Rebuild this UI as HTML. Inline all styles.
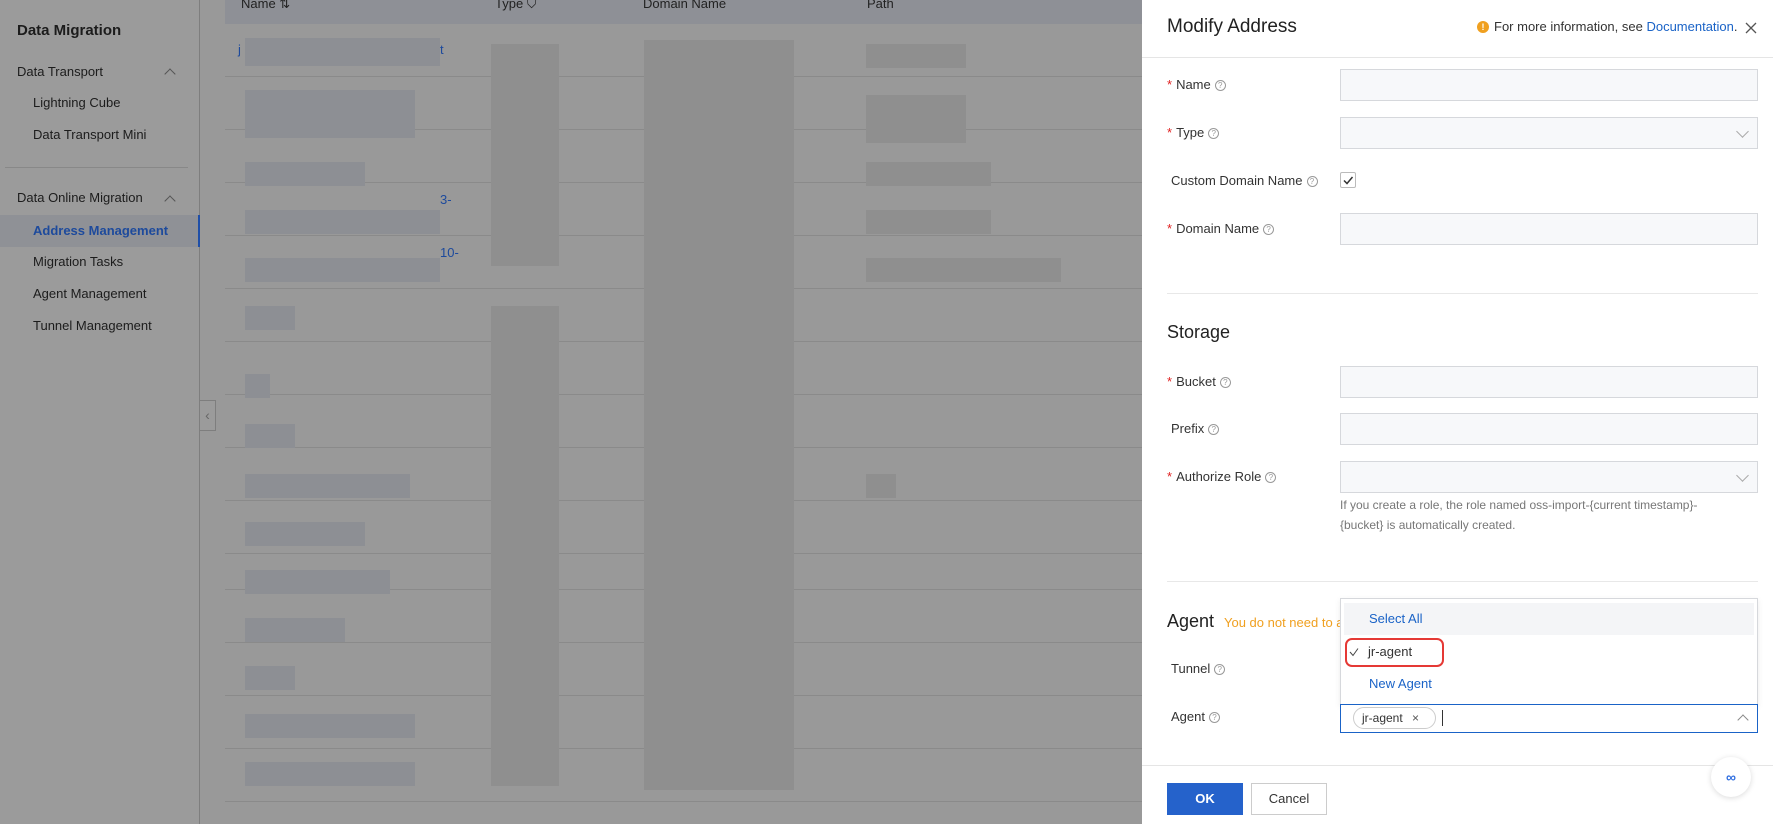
<!DOCTYPE html>
<html><head><meta charset="utf-8"><style>
*{box-sizing:border-box;margin:0;padding:0}
body{width:1773px;height:824px;overflow:hidden;position:relative;background:#999;font-family:"Liberation Sans",sans-serif;font-size:13px;color:#333}
.a{position:absolute}
.sb{left:0;top:0;width:200px;height:824px;background:#9b9b9b;border-right:1px solid #7e7e7e}
.sbt{position:absolute;white-space:nowrap;color:#1c1c1c}
.line{position:absolute;height:1px;background:#8a8a8a}
.blk{position:absolute;background:#8d8f94}
.blk2{position:absolute;background:#8f8f8f}
.dr{left:1142px;top:0;width:631px;height:824px;background:#fff}
.lbl{position:absolute;white-space:nowrap;color:#333;font-size:13px}
.req{color:#e02020;margin-right:4px}
.q{display:inline-block;width:11px;height:11px;border:1px solid #999;border-radius:50%;font-size:8px;line-height:9px;text-align:center;color:#999;margin-left:4px;vertical-align:1px}
.inp{position:absolute;left:1340px;width:418px;height:32px;background:#f7f8fa;border:1px solid #d6d8dc}
.sec{position:absolute;left:1167px;font-size:18px;color:#222}
.hr{position:absolute;left:1167px;width:591px;height:1px;background:#e8e8e8}
.chev{position:absolute;right:10px;top:9px;width:9px;height:9px;border-right:1px solid #aaa;border-bottom:1px solid #aaa;transform:rotate(45deg)}
</style></head><body>
<!-- sidebar -->
<div class="a sb">
<div class="sbt" style="left:17px;top:22px;font-size:15px;font-weight:bold">Data Migration</div>
<div class="sbt" style="left:17px;top:64px">Data Transport</div>
<div class="a" style="left:166px;top:70px;width:8px;height:8px;border-left:1px solid #555;border-top:1px solid #555;transform:rotate(45deg)"></div>
<div class="sbt" style="left:33px;top:95px">Lightning Cube</div>
<div class="sbt" style="left:33px;top:127px">Data Transport Mini</div>
<div class="a" style="left:5px;top:167px;width:183px;height:1px;background:#888"></div>
<div class="sbt" style="left:17px;top:190px">Data Online Migration</div>
<div class="a" style="left:166px;top:197px;width:8px;height:8px;border-left:1px solid #555;border-top:1px solid #555;transform:rotate(45deg)"></div>
<div class="a" style="left:0;top:215px;width:200px;height:32px;background:#8f9196;border-right:2px solid #1f4fa8"></div>
<div class="sbt" style="left:33px;top:223px;color:#1d4a9c;font-weight:bold">Address Management</div>
<div class="sbt" style="left:33px;top:254px">Migration Tasks</div>
<div class="sbt" style="left:33px;top:286px">Agent Management</div>
<div class="sbt" style="left:33px;top:318px">Tunnel Management</div>
</div>
<div class="a" style="left:200px;top:400px;width:16px;height:31px;border:1px solid #7e7e7e;border-left:none;background:#9b9b9b;color:#666;font-size:14px;line-height:28px;text-align:center">‹</div>
<!-- table header -->
<div class="a" style="left:225px;top:0;width:917px;height:24px;background:#8e9096"></div>
<div class="sbt" style="left:241px;top:-4px;color:#222">Name ⇅</div>
<div class="sbt" style="left:495px;top:-4px;color:#222">Type ⛉</div>
<div class="sbt" style="left:643px;top:-4px;color:#222">Domain Name</div>
<div class="sbt" style="left:867px;top:-4px;color:#222">Path</div>
<!-- row lines -->
<div class="line" style="left:225px;top:76px;width:917px"></div>
<div class="line" style="left:225px;top:129px;width:917px"></div>
<div class="line" style="left:225px;top:182px;width:917px"></div>
<div class="line" style="left:225px;top:235px;width:917px"></div>
<div class="line" style="left:225px;top:288px;width:917px"></div>
<div class="line" style="left:225px;top:341px;width:917px"></div>
<div class="line" style="left:225px;top:394px;width:917px"></div>
<div class="line" style="left:225px;top:447px;width:917px"></div>
<div class="line" style="left:225px;top:500px;width:917px"></div>
<div class="line" style="left:225px;top:553px;width:917px"></div>
<div class="line" style="left:225px;top:589px;width:917px"></div>
<div class="line" style="left:225px;top:642px;width:917px"></div>
<div class="line" style="left:225px;top:695px;width:917px"></div>
<div class="line" style="left:225px;top:748px;width:917px"></div>
<div class="line" style="left:225px;top:801px;width:917px"></div>
<!-- blurred blocks -->
<div class="blk" style="left:245px;top:38px;width:195px;height:28px"></div>
<div class="blk" style="left:245px;top:90px;width:170px;height:48px"></div>
<div class="blk" style="left:245px;top:162px;width:120px;height:24px"></div>
<div class="blk" style="left:245px;top:210px;width:195px;height:24px"></div>
<div class="blk" style="left:245px;top:258px;width:195px;height:24px"></div>
<div class="blk" style="left:245px;top:306px;width:50px;height:24px"></div>
<div class="blk" style="left:245px;top:374px;width:25px;height:24px"></div>
<div class="blk" style="left:245px;top:424px;width:50px;height:24px"></div>
<div class="blk" style="left:245px;top:474px;width:165px;height:24px"></div>
<div class="blk" style="left:245px;top:522px;width:120px;height:24px"></div>
<div class="blk" style="left:245px;top:570px;width:145px;height:24px"></div>
<div class="blk" style="left:245px;top:618px;width:100px;height:24px"></div>
<div class="blk" style="left:245px;top:666px;width:50px;height:24px"></div>
<div class="blk" style="left:245px;top:714px;width:170px;height:24px"></div>
<div class="blk" style="left:245px;top:762px;width:170px;height:24px"></div>
<div class="blk2" style="left:491px;top:44px;width:68px;height:222px"></div>
<div class="blk2" style="left:491px;top:306px;width:68px;height:480px"></div>
<div class="blk2" style="left:644px;top:40px;width:150px;height:750px"></div>
<div class="blk2" style="left:866px;top:44px;width:100px;height:24px"></div>
<div class="blk2" style="left:866px;top:95px;width:100px;height:48px"></div>
<div class="blk2" style="left:866px;top:162px;width:125px;height:24px"></div>
<div class="blk2" style="left:866px;top:210px;width:125px;height:24px"></div>
<div class="blk2" style="left:866px;top:258px;width:195px;height:24px"></div>
<div class="blk2" style="left:866px;top:474px;width:30px;height:24px"></div>
<div class="sbt" style="left:238px;top:42px;color:#1d4a9c">j</div>
<div class="sbt" style="left:440px;top:42px;color:#1d4a9c">t</div>
<div class="sbt" style="left:440px;top:192px;color:#1d4a9c">3-</div>
<div class="sbt" style="left:440px;top:245px;color:#1d4a9c">10-</div>
<!-- drawer -->
<div class="a dr"></div>
<div class="a" style="left:1167px;top:16px;font-size:19px;color:#222">Modify Address</div>
<div class="a" style="left:1477px;top:21px;width:12px;height:12px;border-radius:50%;background:#f0a020;color:#fff;font-size:9px;font-weight:bold;text-align:center;line-height:12px">!</div>
<div class="a" style="left:1494px;top:19px;font-size:13px;color:#333;white-space:nowrap">For more information, see <span style="color:#1a63c7">Documentation</span>.</div>
<svg class="a" style="left:1745px;top:22px" width="12" height="12"><path d="M1 1L11 11M11 1L1 11" stroke="#555" stroke-width="1.3"/></svg>
<div class="a" style="left:1142px;top:57px;width:631px;height:1px;background:#e5e5e5"></div>

<div class="lbl" style="left:1167px;top:77px"><span class="req">*</span>Name<span class="q">?</span></div>
<div class="inp" style="top:69px"></div>
<div class="lbl" style="left:1167px;top:125px"><span class="req">*</span>Type<span class="q">?</span></div>
<div class="inp" style="top:117px"><div class="chev"></div></div>
<div class="lbl" style="left:1171px;top:173px">Custom Domain Name<span class="q">?</span></div>
<div class="a" style="left:1340px;top:172px;width:16px;height:16px;border:1px solid #bbb;border-radius:2px"></div>
<svg class="a" style="left:1342px;top:174px" width="12" height="12"><path d="M2 6.5L5 9.5L10.5 3" stroke="#333" stroke-width="1.5" fill="none"/></svg>
<div class="lbl" style="left:1167px;top:221px"><span class="req">*</span>Domain Name<span class="q">?</span></div>
<div class="inp" style="top:213px"></div>
<div class="hr" style="top:293px"></div>

<div class="sec" style="top:322px">Storage</div>
<div class="lbl" style="left:1167px;top:374px"><span class="req">*</span>Bucket<span class="q">?</span></div>
<div class="inp" style="top:366px"></div>
<div class="lbl" style="left:1171px;top:421px">Prefix<span class="q">?</span></div>
<div class="inp" style="top:413px"></div>
<div class="lbl" style="left:1167px;top:469px"><span class="req">*</span>Authorize Role<span class="q">?</span></div>
<div class="inp" style="top:461px"><div class="chev"></div></div>
<div class="a" style="left:1340px;top:495px;font-size:12px;color:#777;line-height:20px;width:420px">If you create a role, the role named oss-import-{current timestamp}-<br>{bucket} is automatically created.</div>
<div class="hr" style="top:581px"></div>

<div class="sec" style="top:611px">Agent</div>
<div class="a" style="left:1224px;top:615px;font-size:13px;color:#f0a020;white-space:nowrap">You do not need to a</div>
<div class="lbl" style="left:1171px;top:661px">Tunnel<span class="q">?</span></div>
<div class="lbl" style="left:1171px;top:709px">Agent<span class="q">?</span></div>
<div class="a" style="left:1340px;top:598px;width:418px;height:107px;background:#fff;border:1px solid #d6d8dc;box-shadow:0 2px 6px rgba(0,0,0,.08)"></div>
<div class="a" style="left:1344px;top:603px;width:410px;height:32px;background:#f4f5f7"></div>
<div class="a" style="left:1369px;top:611px;color:#1a63c7;font-size:13px">Select All</div>
<div class="a" style="left:1345px;top:638px;width:99px;height:29px;border:2px solid #e53935;border-radius:7px"></div>
<svg class="a" style="left:1349px;top:647px" width="10" height="10"><path d="M1 5L4 8.5L9 1.5" stroke="#444" stroke-width="1" fill="none"/></svg>
<div class="a" style="left:1368px;top:644px;color:#333;font-size:13px">jr-agent</div>
<div class="a" style="left:1369px;top:676px;color:#1a63c7;font-size:13px">New Agent</div>
<div class="a" style="left:1340px;top:704px;width:418px;height:29px;border:1px solid #1a63c7;background:#fff"></div>
<div class="a" style="left:1353px;top:707px;width:83px;height:22px;border:1px solid #ccc;border-radius:11px;font-size:12px;line-height:20px;padding-left:8px;color:#333">jr-agent <span style="margin-left:6px;color:#555">×</span></div>
<div class="a" style="left:1442px;top:710px;width:1px;height:16px;background:#333"></div>
<div class="a" style="left:1739px;top:716px;width:8px;height:8px;border-left:1px solid #888;border-top:1px solid #888;transform:rotate(45deg)"></div>

<div class="a" style="left:1142px;top:765px;width:631px;height:1px;background:#e5e5e5"></div>
<div class="a" style="left:1167px;top:783px;width:76px;height:32px;background:#2562cb;color:#fff;font-weight:bold;text-align:center;line-height:32px;font-size:13px">OK</div>
<div class="a" style="left:1251px;top:783px;width:76px;height:32px;border:1px solid #ccc;color:#333;text-align:center;line-height:30px;font-size:13px">Cancel</div>
<div class="a" style="left:1711px;top:757px;width:40px;height:40px;border-radius:50%;background:#fff;box-shadow:0 1px 6px rgba(0,0,0,.15);color:#2f6ee0;text-align:center;line-height:40px;font-size:14px;font-weight:bold">∞</div>
</body></html>
